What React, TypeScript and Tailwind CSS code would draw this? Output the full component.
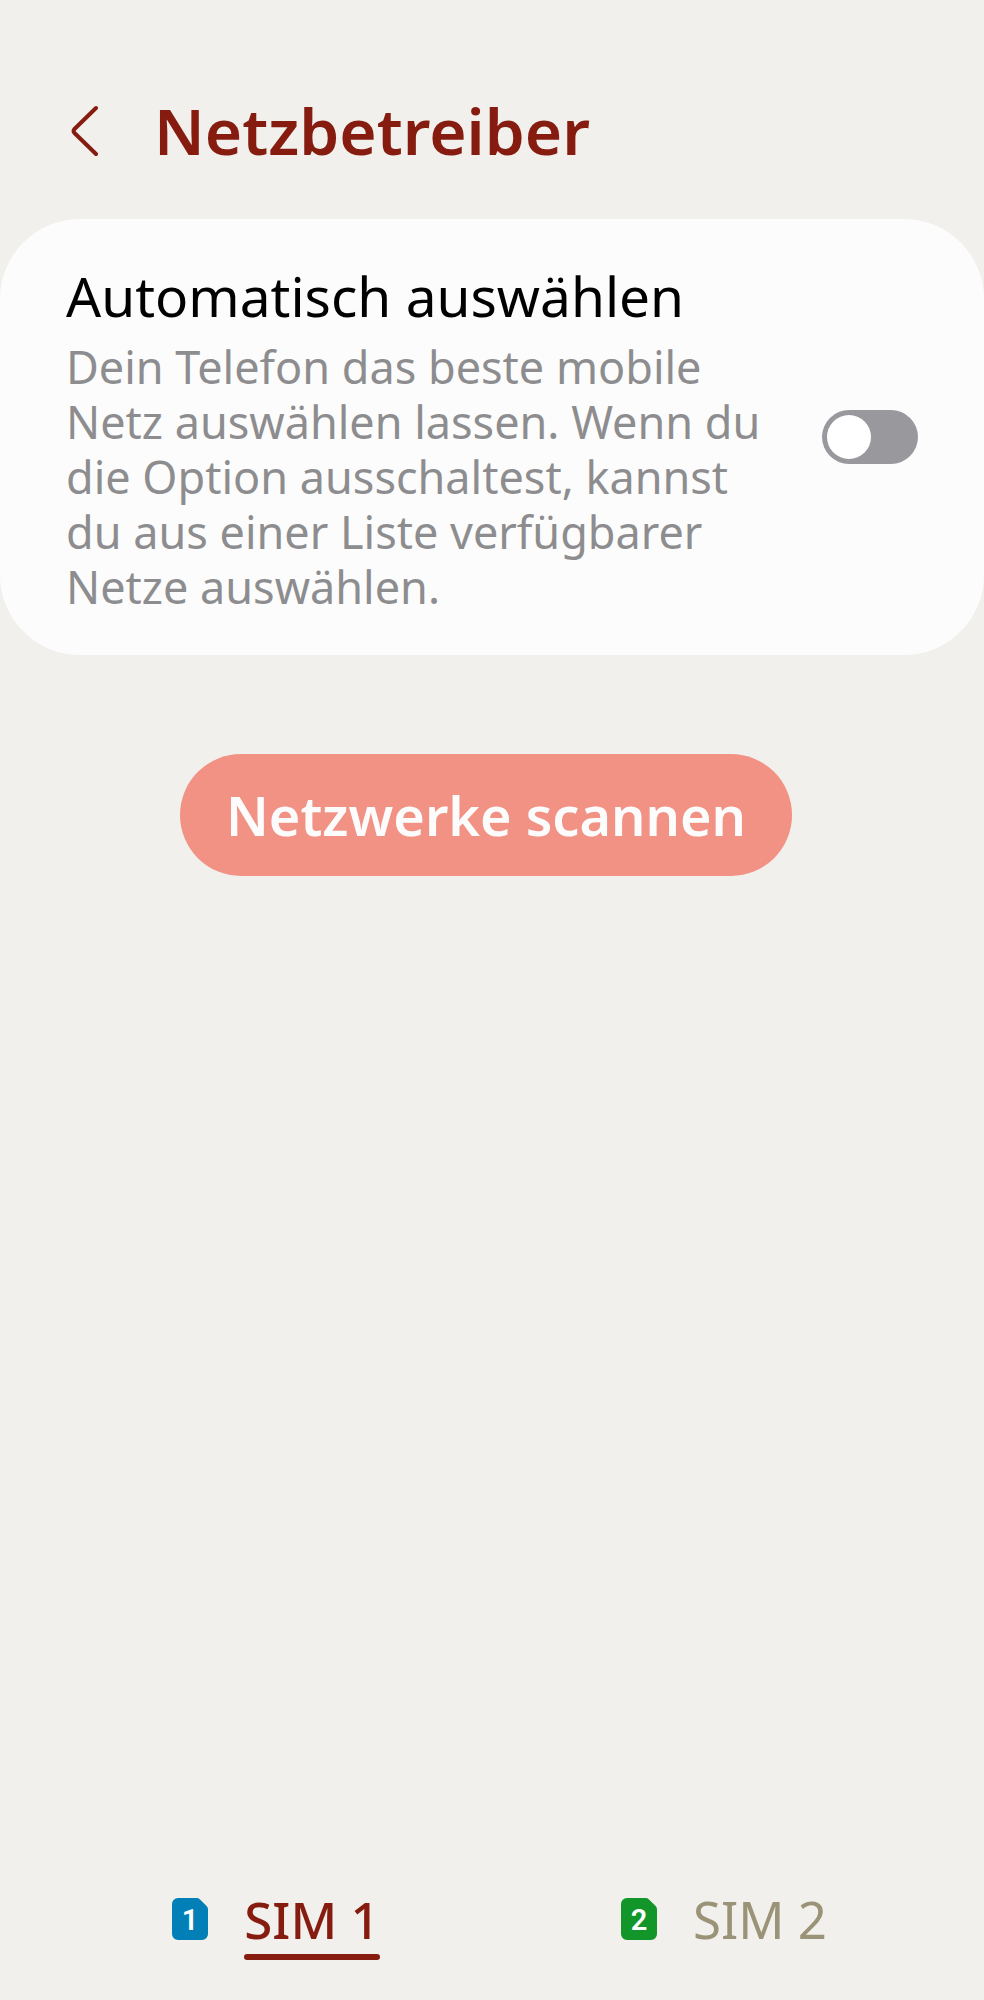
import { useState } from 'react';

type Sim = { id: number; label: string; chip: string };

const SIMS: Sim[] = [
  { id: 1, label: 'SIM 1', chip: '#027fb6' },
  { id: 2, label: 'SIM 2', chip: '#12962a' },
];

function SimIcon({ sim }: { sim: Sim }) {
  return (
    <svg width="36" height="42" viewBox="0 0 36 42" className="mb-1.5" aria-hidden="true">
      <path
        d="M6 0h18.500a5 5 0 0 1 3.500 1.400l6.600 6.600a5 5 0 0 1 1.400 3.500V36a6 6 0 0 1-6 6H6a6 6 0 0 1-6-6V6a6 6 0 0 1 6-6Z"
        fill={sim.chip}
      />
      <text x="18" y="32" textAnchor="middle" fontSize="29" fontWeight="600" fill="#fff" className="font-[Roboto,sans-serif]">
        {sim.id}
      </text>
    </svg>
  );
}

export default function App() {
  const [auto, setAuto] = useState(false);
  const [activeSim, setActiveSim] = useState(1);

  return (
    <div className="min-h-screen flex flex-col bg-[#f1f0ec] font-['Noto_Sans',sans-serif]">
      {/* Title bar */}
      <header className="flex items-center gap-14 px-[70px] pt-[91px] pb-12 text-[#861c10]">
        <button aria-label="Zurück">
          <svg width="28" height="52" viewBox="0 0 28 52" fill="none" aria-hidden="true">
            <path
              d="M26 3 4.500 24Q2.500 26 4.500 28L26 49"
              stroke="currentColor"
              strokeWidth="4"
              strokeLinecap="round"
              strokeLinejoin="round"
            />
          </svg>
        </button>
        <h1 className="text-[64px] leading-[80px] font-semibold">Netzbetreiber</h1>
      </header>

      <main className="flex-1">
        {/* Auto select card */}
        <section className="flex items-center justify-between rounded-[80px] bg-[#fcfcfc] px-[66px] py-[41px]">
          <div className="max-w-[700px]">
            <label htmlFor="auto" className="block text-[55px] leading-[72px] text-black">
              Automatisch auswählen
            </label>
            <p id="auto-hint" className="mt-[7px] text-[45px] leading-[55px] text-[#8d8d8f]">
              Dein Telefon das beste mobile Netz auswählen lassen. Wenn du die Option ausschaltest, kannst du aus einer
              Liste verfügbarer Netze auswählen.
            </p>
          </div>
          <input
            id="auto"
            type="checkbox"
            role="switch"
            aria-describedby="auto-hint"
            checked={auto}
            onChange={(e) => setAuto(e.target.checked)}
            className="h-[54px] w-24 shrink-0 appearance-none rounded-full bg-[#99989d] p-[5px] before:block before:size-11 before:rounded-full before:bg-white checked:bg-[#861c10] checked:before:ml-auto"
          />
        </section>

        <div className="flex justify-center pt-[99px] pr-3">
          <button className="h-[122px] rounded-full bg-[#f19284] px-[46px] text-[54px] font-semibold text-[#fcfcfc]">
            Netzwerke scannen
          </button>
        </div>
      </main>

      {/* SIM tabs */}
      <nav role="tablist" className="grid grid-cols-2 pr-9 pb-10 pl-[52px]">
        {SIMS.map((sim) => (
          <button
            key={sim.id}
            role="tab"
            aria-selected={activeSim === sim.id}
            onClick={() => setActiveSim(sim.id)}
            className="flex items-center justify-center gap-9"
          >
            <SimIcon sim={sim} />
            <span
              className={`text-[51px] leading-[70px] after:block after:h-1.5 after:rounded-full ${
                activeSim === sim.id ? 'font-medium text-[#861c10] after:bg-[#861c10]' : 'text-[#9b9377]'
              }`}
            >
              {sim.label}
            </span>
          </button>
        ))}
      </nav>
    </div>
  );
}
